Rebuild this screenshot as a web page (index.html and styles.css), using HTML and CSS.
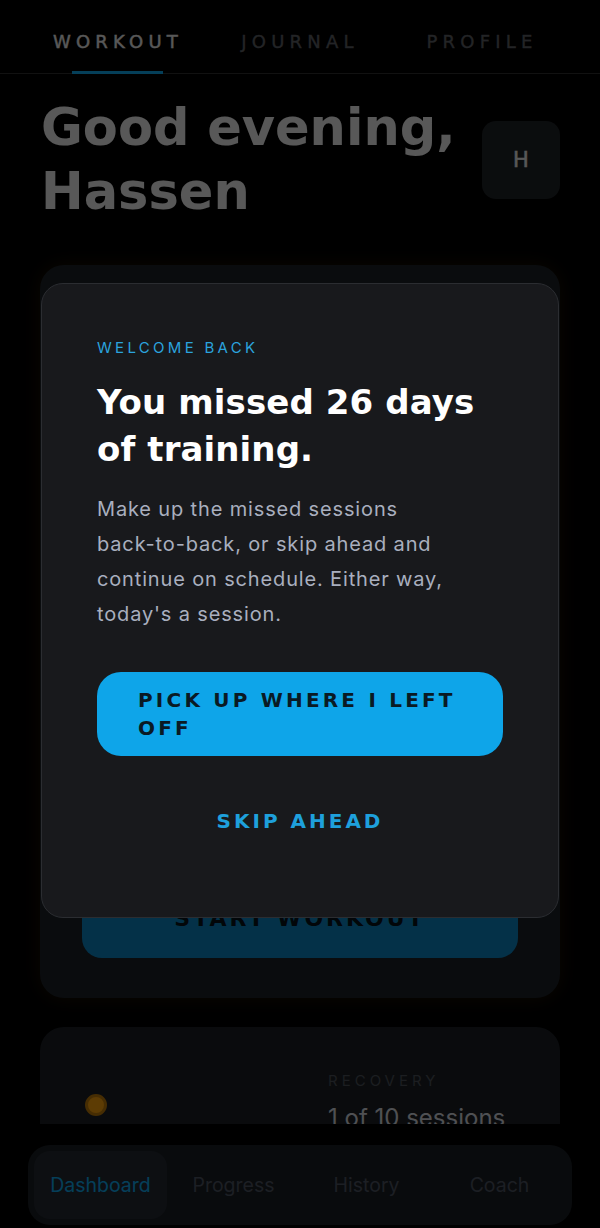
FILE: index.html
```html
<!DOCTYPE html>
<html lang="en">
<head>
    <meta charset="UTF-8">
    <meta name="viewport" content="width=device-width, initial-scale=1.0">
    <title>Workout</title>
    <link rel="stylesheet" href="styles.css">
</head>
<body>
    <div class="app">
        <nav class="tabs">
            <a class="tab active">WORKOUT</a>
            <a class="tab">JOURNAL</a>
            <a class="tab">PROFILE</a>
        </nav>

        <main class="content">
            <section class="greeting">
                <h1>Good evening,<br>Hassen</h1>
                <div class="avatar">H</div>
            </section>

            <section class="today-card">
                <p class="card-label">TODAY'S SESSION</p>
                <h2 class="card-title">Upper Body Strength</h2>
                <p class="card-meta">Week 3 &middot; Day 2 &middot; 45 min</p>
                <ul class="exercise-list">
                    <li>Bench press <span>4 &times; 8</span></li>
                    <li>Pull-ups <span>4 &times; 6</span></li>
                    <li>Overhead press <span>3 &times; 10</span></li>
                    <li>Rows <span>3 &times; 12</span></li>
                </ul>
                <button class="start-btn">START WORKOUT</button>
            </section>

            <section class="recovery-card">
                <div class="recovery-dot"></div>
                <div class="recovery-info">
                    <p class="recovery-label">RECOVERY</p>
                    <p class="recovery-value">1 of 10 sessions</p>
                </div>
            </section>
        </main>

        <footer class="bottom">
            <nav class="bottom-nav">
                <a class="nav-item active">Dashboard</a>
                <a class="nav-item">Progress</a>
                <a class="nav-item">History</a>
                <a class="nav-item">Coach</a>
            </nav>
        </footer>
    </div>

    <div class="overlay">
        <div class="modal">
            <p class="modal-label">WELCOME BACK</p>
            <h2 class="modal-title">You missed 26 days of training.</h2>
            <p class="modal-text">Make up the missed sessions <span class="nowrap">back-to-back,</span> or skip ahead and continue on schedule. Either way, today's a session.</p>
            <button class="primary-btn">PICK UP WHERE I LEFT OFF</button>
            <button class="skip-btn">SKIP AHEAD</button>
        </div>
    </div>
</body>
</html>
```

FILE: styles.css
```css
* {
    box-sizing: border-box;
}
body {
    margin: 0;
    background-color: #000;
    font-family: Inter, "Noto Sans", sans-serif;
    color: #e8e8e8;
}
p, h1, h2, ul {
    margin: 0;
}
button {
    border: none;
    cursor: pointer;
}
.nowrap {
    white-space: nowrap;
}
.app {
    height: 1228px;
    display: flex;
    flex-direction: column;
}

/* top tabs */
.tabs {
    display: grid;
    grid-template-columns: repeat(3, 1fr);
    height: 74px;
    padding: 0 27px;
    border-bottom: 1px solid #2e2e2e;
}
.tab {
    position: relative;
    display: flex;
    align-items: center;
    justify-content: center;
    padding-top: 9px;
    font-family: "DejaVu Sans", sans-serif;
    font-size: 18px;
    letter-spacing: 5.2px;
    -webkit-text-stroke: 0.4px currentColor;
    color: #5c5f64;
}
.tab.active {
    color: #e8e8e8;
}
.tab.active::after {
    content: "";
    position: absolute;
    left: 50%;
    bottom: -1px;
    width: 91px;
    height: 3px;
    margin-left: -46px;
    background-color: #0ea5e9;
}

/* main */
.content {
    flex: 1;
    overflow: hidden;
    padding: 0 40px;
}
.greeting {
    display: flex;
    align-items: center;
    justify-content: space-between;
    padding-top: 22px;
}
.greeting h1 {
    font-family: "DejaVu Sans", sans-serif;
    font-weight: bold;
    font-size: 51px;
    line-height: 64px;
    color: #e6e6e6;
    padding-left: 1px;
}
.avatar {
    width: 78px;
    height: 78px;
    border-radius: 14px;
    background-color: #1f2226;
    display: flex;
    align-items: center;
    justify-content: center;
    font-family: "DejaVu Sans", sans-serif;
    font-size: 21px;
    -webkit-text-stroke: 0.5px currentColor;
    color: #e5e5e5;
}
.today-card {
    margin-top: 41px;
    min-height: 733px;
    padding: 40px 42px;
    border-radius: 24px;
    background-color: #1c2126;
    box-shadow: 0 0 22px rgba(245, 158, 11, 0.12);
    display: flex;
    flex-direction: column;
    gap: 14px;
}
.card-label {
    font-size: 14px;
    letter-spacing: 3px;
    color: #f59e0b;
}
.card-title {
    font-family: "DejaVu Sans", sans-serif;
    font-size: 30px;
}
.card-meta {
    color: #9aa0ad;
}
.exercise-list {
    list-style: none;
    padding: 0;
    display: flex;
    flex-direction: column;
    gap: 18px;
    font-size: 18px;
}
.exercise-list span {
    float: right;
    color: #9aa0ad;
}
.start-btn {
    margin-top: auto;
    height: 80px;
    border-radius: 20px;
    background-color: #0c82bd;
    color: #06121a;
    font-family: "DejaVu Sans", sans-serif;
    font-weight: bold;
    font-size: 22px;
    letter-spacing: 3px;
}
.recovery-card {
    margin-top: 29px;
    height: 180px;
    padding: 44px 45px;
    border-radius: 24px;
    background-color: #1b1f24;
    display: flex;
}
.recovery-dot {
    flex: none;
    width: 22px;
    height: 22px;
    margin-top: 23px;
    border-radius: 50%;
    background-color: #f59e0b;
    border: 3px solid #b87708;
}
.recovery-info {
    margin-left: 221px;
}
.recovery-label {
    font-size: 15px;
    letter-spacing: 4px;
    color: #4a4f57;
}
.recovery-value {
    margin-top: 13px;
    font-size: 24px;
    color: #cfd3da;
}

/* bottom nav */
.bottom {
    padding: 21px 28px 3px;
}
.bottom-nav {
    display: grid;
    grid-template-columns: repeat(4, 1fr);
    height: 80px;
    padding: 6px;
    border-radius: 22px;
    background-color: #1a1e23;
}
.nav-item {
    display: flex;
    align-items: center;
    justify-content: center;
    border-radius: 16px;
    font-size: 19.5px;
    color: #4a525f;
}
.nav-item.active {
    background-color: #232931;
    color: #0ea5e9;
}

/* welcome back modal */
.overlay {
    position: fixed;
    inset: 0;
    background-color: rgba(0, 0, 0, 0.62);
    display: flex;
    align-items: center;
    justify-content: center;
    padding: 0 41px 28px;
}
.modal {
    width: 100%;
    padding: 54px 55px 64px;
    border-radius: 22px;
    border: 1px solid #2b2d31;
    background-color: #18191c;
    display: flex;
    flex-direction: column;
    align-items: flex-start;
}
.modal-label {
    font-size: 15px;
    line-height: 20px;
    letter-spacing: 3.3px;
    color: #2ba3de;
}
.modal-title {
    margin-top: 21px;
    font-family: "DejaVu Sans", sans-serif;
    font-weight: bold;
    font-size: 34px;
    line-height: 47px;
    letter-spacing: 0.1px;
    color: #fff;
}
.modal-text {
    margin-top: 19px;
    max-width: 372px;
    font-size: 20px;
    line-height: 35px;
    letter-spacing: 0.85px;
    color: #a9afbf;
}
.primary-btn {
    margin-top: 40px;
    width: 100%;
    padding: 14px 38px 14px 41px;
    border-radius: 24px;
    background-color: #0ea5e9;
    color: #0a1a24;
    text-align: left;
    font-family: "DejaVu Sans", sans-serif;
    font-weight: bold;
    font-size: 20px;
    line-height: 28px;
    letter-spacing: 3.2px;
}
.skip-btn {
    margin-top: 33px;
    align-self: center;
    padding: 22px 20px;
    background: none;
    color: #1ea0dc;
    font-family: "DejaVu Sans", sans-serif;
    font-weight: bold;
    font-size: 20px;
    line-height: 20px;
    letter-spacing: 3px;
}
```
